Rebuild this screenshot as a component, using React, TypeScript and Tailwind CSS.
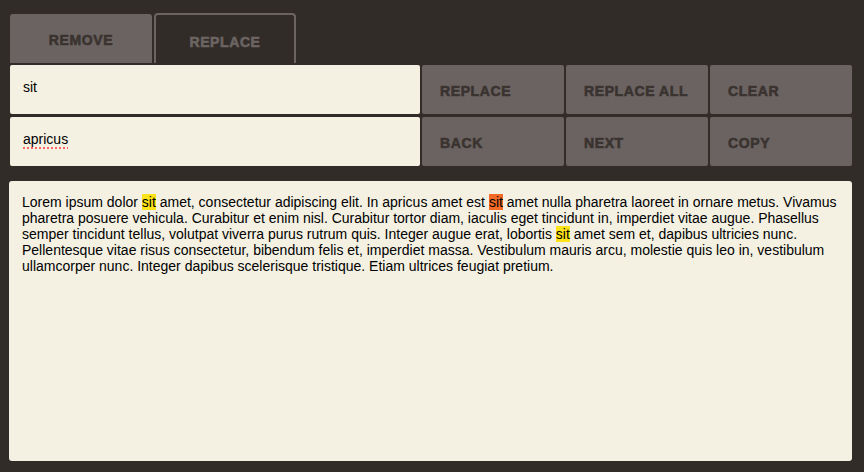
import React from "react";

const btn =
  "flex items-center pl-[18px] pt-[3px] bg-[#6b6361] rounded-[2px] text-[14px] font-bold tracking-[0.6px] text-[#3a3330] [-webkit-text-stroke:0.6px_#3a3330]";

export default function App() {
  const body = "font-['Liberation_Sans',Arial,sans-serif]";
  return (
    <div className={`w-[864px] h-[472px] bg-[#322c29] ${body} overflow-hidden`}>
      <div className="flex gap-[2px] pl-[10px] pt-[13px] items-end">
        <div className="w-[142px] h-[49px] bg-[#6b6361] rounded-t-[3px] flex items-center justify-center pt-[3px] text-[14px] font-bold tracking-[0.6px] text-[#3a3330] [-webkit-text-stroke:0.6px_#3a3330]">
          REMOVE
        </div>
        <div className="w-[142px] h-[50px] border-2 border-b-0 border-[#6b6461] rounded-t-[4px] flex items-center justify-center pt-[7px] text-[14px] font-bold tracking-[0.6px] text-[#6b6461] [-webkit-text-stroke:0.6px_#6b6461]">
          REPLACE
        </div>
      </div>
      <div className="mt-[2px] grid grid-cols-[410px_142px_142px_142px] grid-rows-[49px_49px] gap-x-[2px] gap-y-[3px] pl-[10px]">
        <div className="bg-[#f4f0e2] rounded-[2px] flex items-center pl-[13px] pb-[4px] text-[14px] text-black">
          sit
        </div>
        <div className={btn}>REPLACE</div>
        <div className={btn}>REPLACE ALL</div>
        <div className={btn}>CLEAR</div>
        <div className="bg-[#f4f0e2] rounded-[2px] flex items-center pl-[13px] pb-[4px] text-[14px] text-black">
          <span className="underline decoration-dotted decoration-red-400 decoration-2 underline-offset-[3px]">apricus</span>
        </div>
        <div className={btn}>BACK</div>
        <div className={btn}>NEXT</div>
        <div className={btn}>COPY</div>
      </div>
      <div className="mt-[15px] ml-[9px] w-[843px] h-[280px] bg-[#f4f1e3] rounded-[3px] px-[13px] pt-[13px] text-[14px] leading-[16px] text-black">
        Lorem ipsum dolor <span className="bg-[#fde31b]">sit</span> amet, consectetur adipiscing elit. In apricus amet est{" "}
        <span className="bg-[#f26a26]">sit</span> amet nulla pharetra laoreet in ornare metus. Vivamus pharetra posuere
        vehicula. Curabitur et enim nisl. Curabitur tortor diam, iaculis eget tincidunt in, imperdiet vitae augue.
        Phasellus semper tincidunt tellus, volutpat viverra purus rutrum quis. Integer augue erat, lobortis{" "}
        <span className="bg-[#fde31b]">sit</span> amet sem et, dapibus ultricies nunc. Pellentesque vitae risus
        consectetur, bibendum felis et, imperdiet massa. Vestibulum mauris arcu, molestie quis leo in, vestibulum
        ullamcorper nunc. Integer dapibus scelerisque tristique. Etiam ultrices feugiat pretium.
      </div>
    </div>
  );
}
